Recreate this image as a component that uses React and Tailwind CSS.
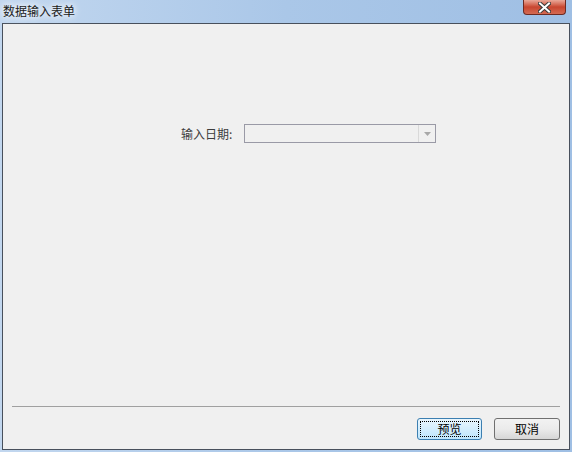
import React from 'react';

const font = { fontFamily: '"Noto Sans CJK SC", "Microsoft YaHei", sans-serif' };

function CloseButton() {
  return (
    <div className="absolute right-[6px] top-0 w-[43px] h-[15px] rounded-b-[4px] border border-t-0 border-[#6d2a22] bg-linear-to-b from-[#e9a899] via-[#c8452f] to-[#d46a52] flex items-center justify-center">
      <svg width="13" height="11" viewBox="0 0 13 11">
        <path d="M2 1.5 L11 9.5 M11 1.5 L2 9.5" stroke="#3b3b3b" strokeWidth="4" strokeLinecap="square" />
        <path d="M2 1.5 L11 9.5 M11 1.5 L2 9.5" stroke="#ffffff" strokeWidth="2" strokeLinecap="square" />
      </svg>
    </div>
  );
}

export default function App() {
  return (
    <div
      className="w-[572px] h-[452px] flex flex-col overflow-hidden bg-linear-to-r from-[#c2d7ef] via-[#aac7e8] to-[#9fbfe4]"
      style={font}
    >
      {/* Title bar */}
      <div className="relative h-[23px] shrink-0">
        <span className="absolute left-[3px] top-[3px] text-[12px] leading-[16px] text-[#1a1a1a] [text-shadow:0_0_6px_#ffffff,0_0_10px_#ffffff]">
          数据输入表单
        </span>
        <CloseButton />
      </div>

      {/* Client area */}
      <div className="flex-1 mx-[2px] mb-[2px] border border-[#48505c] bg-[#f0f0f0] flex flex-col">
        <div className="flex-1 pt-[100px]">
          <div className="flex items-center pl-[178px] gap-[12px]">
            <span className="text-[12px] leading-[16px] text-[#3c3c3c]">输入日期:</span>
            <div className="w-[192px] h-[19px] border border-[#9a9aa6] bg-[#f0f0f0] flex justify-end">
              <div className="w-[17px] h-full border-l border-[#d9d9d9] flex items-center justify-center">
                <svg width="7" height="4" viewBox="0 0 7 4">
                  <path d="M0 0 H7 L3.5 4 Z" fill="#a8a8a8" />
                </svg>
              </div>
            </div>
          </div>
        </div>

        {/* Separator */}
        <div className="mx-[9px] h-px bg-[#a0a0a0]" />

        {/* Buttons */}
        <div className="flex justify-end gap-[12px] pt-[11px] pb-[9px] pr-[9px]">
          <button className="w-[65px] h-[22px] rounded-[3px] border border-[#3c7fb1] bg-linear-to-b from-[#eaf6fd] to-[#bee6fd] p-[2px] text-[12px] text-black">
            <div className="w-full h-full border border-dotted border-black flex items-center justify-center leading-none">
              预览
            </div>
          </button>
          <button className="w-[66px] h-[22px] rounded-[3px] border border-[#707070] bg-linear-to-b from-[#f2f2f2] via-[#ebebeb] to-[#d6d6d6] text-[12px] text-black flex items-center justify-center leading-none">
            取消
          </button>
        </div>
      </div>
    </div>
  );
}
